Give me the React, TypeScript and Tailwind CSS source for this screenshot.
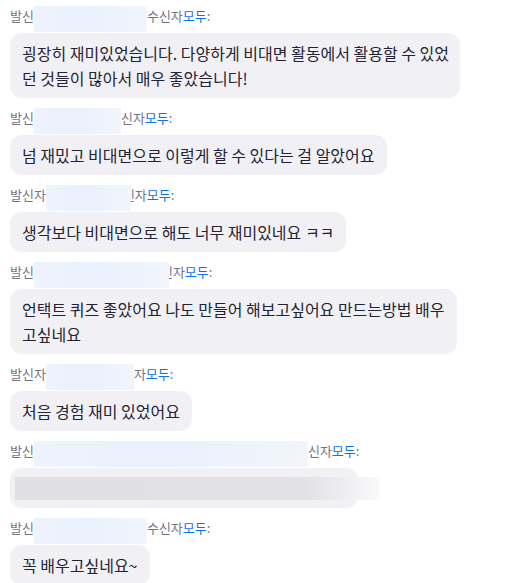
import React from 'react';

type Header = {
  left: string;
  box: number;
  right: string;
  cut?: number;
};

type Message = {
  header: Header;
  lines?: string[];
  width?: number;
  blurred?: boolean;
};

const messages: Message[] = [
  {
    header: { left: '발신', box: 113, right: '수신자' },
    lines: ['굉장히 재미있었습니다. 다양하게 비대면 활동에서 활용할 수 있었', '던 것들이 많아서 매우 좋았습니다!'],
    width: 450,
  },
  {
    header: { left: '발신', box: 87, right: '신자' },
    lines: ['넘 재밌고 비대면으로 이렇게 할 수 있다는 걸 알았어요'],
  },
  {
    header: { left: '발신자', box: 85, right: '신자', cut: 8 },
    lines: ['생각보다 비대면으로 해도 너무 재미있네요 ㅋㅋ'],
  },
  {
    header: { left: '발신', box: 135, right: '신자', cut: 8 },
    lines: ['언택트 퀴즈 좋았어요 나도 만들어 해보고싶어요 만드는방법 배우', '고싶네요'],
    width: 447,
  },
  {
    header: { left: '발신자', box: 88, right: '자' },
    lines: ['처음 경험 재미 있었어요'],
  },
  {
    header: { left: '발신', box: 274, right: '신자' },
    blurred: true,
  },
  {
    header: { left: '발신', box: 113, right: '수신자' },
    lines: ['꼭 배우고싶네요~'],
  },
];

function MessageHeader({ h }: { h: Header }) {
  return (
    <div className="flex items-center h-5 text-[13px] leading-5 text-[#747487] whitespace-nowrap">
      <span>{h.left}</span>
      <span
        className="relative z-10 inline-block h-[26px] mt-[6px] bg-gradient-to-r from-[#eef3fc] via-[#eaf1fc] to-[#f2f5fb]"
        style={{ width: h.box, marginRight: h.cut ? -h.cut : 0 }}
      />
      <span>{h.right}</span>
      <span className="text-[#0e72ed]">모두</span>
      <span>:</span>
    </div>
  );
}

export default function App() {
  return (
    <div
      className="w-[520px] h-[583px] overflow-hidden bg-white px-[10px] pt-[6px]"
      style={{ fontFamily: '"Noto Sans CJK KR", "Noto Sans", sans-serif' }}
    >
      {messages.map((m, i) => (
        <div key={i} className="mb-[10px]">
          <MessageHeader h={m.header} />
          {m.blurred ? (
            <div className="mt-[7px] w-[348px] h-10 rounded-xl bg-[#f1f1f5] flex items-center pl-[5px]">
              <div className="h-[23px] w-[365px] shrink-0 bg-gradient-to-r from-[#e0e0e4] via-[#e2e2e6] via-80% to-[#fafafb]" />
            </div>
          ) : (
            <div
              className="mt-[7px] w-fit rounded-xl bg-[#f1f1f5] px-3 py-[7.5px] text-[16px] leading-[25px] text-[#232333] whitespace-nowrap"
              style={m.width ? { width: m.width } : undefined}
            >
              {m.lines!.map((l, j) => (
                <div key={j}>{l}</div>
              ))}
            </div>
          )}
        </div>
      ))}
    </div>
  );
}
